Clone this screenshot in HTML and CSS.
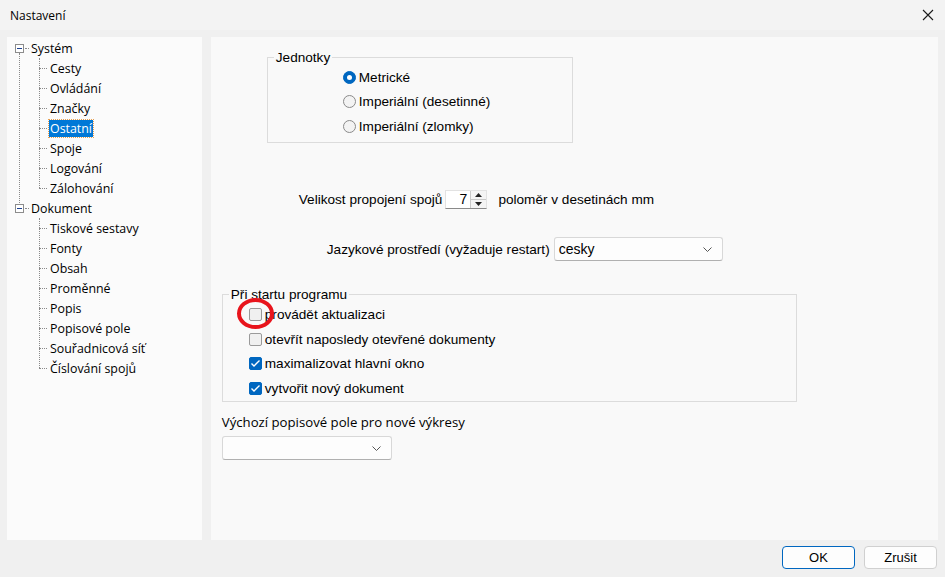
FILE: index.html
```html
<!DOCTYPE html>
<html lang="cs">
<head>
<meta charset="utf-8">
<title>Nastavení</title>
<link rel="stylesheet" href="styles.css">
</head>
<body>
<div class="window">
  <div class="titlebar">
    <span class="title">Nastavení</span>
    <svg class="close" width="12" height="12" viewBox="0 0 12 12"><path d="M1 1 L11 11 M11 1 L1 11" stroke="#1a1a1a" stroke-width="1.1" fill="none"/></svg>
  </div>
  <div class="main">
    <div class="tree">
      <div class="node root">
        <div class="row"><span class="pm"></span><span class="hdot"></span><span class="lbl">Systém</span></div>
        <div class="children">
          <div class="row child"><span class="hdot2"></span><span class="lbl">Cesty</span></div>
          <div class="row child"><span class="hdot2"></span><span class="lbl">Ovládání</span></div>
          <div class="row child"><span class="hdot2"></span><span class="lbl">Značky</span></div>
          <div class="row child"><span class="hdot2"></span><span class="lbl sel">Ostatní</span></div>
          <div class="row child"><span class="hdot2"></span><span class="lbl">Spoje</span></div>
          <div class="row child"><span class="hdot2"></span><span class="lbl">Logování</span></div>
          <div class="row child last"><span class="hdot2"></span><span class="lbl">Zálohování</span></div>
        </div>
      </div>
      <div class="node root lastroot">
        <div class="row"><span class="pm"></span><span class="hdot"></span><span class="lbl">Dokument</span></div>
        <div class="children">
          <div class="row child"><span class="hdot2"></span><span class="lbl">Tiskové sestavy</span></div>
          <div class="row child"><span class="hdot2"></span><span class="lbl">Fonty</span></div>
          <div class="row child"><span class="hdot2"></span><span class="lbl">Obsah</span></div>
          <div class="row child"><span class="hdot2"></span><span class="lbl">Proměnné</span></div>
          <div class="row child"><span class="hdot2"></span><span class="lbl">Popis</span></div>
          <div class="row child"><span class="hdot2"></span><span class="lbl">Popisové pole</span></div>
          <div class="row child"><span class="hdot2"></span><span class="lbl">Souřadnicová síť</span></div>
          <div class="row child last"><span class="hdot2"></span><span class="lbl">Číslování spojů</span></div>
        </div>
      </div>
    </div>
    <div class="content">
      <fieldset class="units">
        <legend>Jednotky</legend>
        <div class="opts">
          <div class="radio"><span class="rb on"></span>Metrické</div>
          <div class="radio"><span class="rb"></span>Imperiální (desetinné)</div>
          <div class="radio"><span class="rb"></span>Imperiální (zlomky)</div>
        </div>
      </fieldset>
      <div class="spinrow">
        <span>Velikost propojení spojů</span>
        <div class="spin">
          <span class="val">7</span>
          <div class="arrows">
            <span class="up"><svg width="7" height="4" viewBox="0 0 7 4"><path d="M3.5 0 L7 4 L0 4Z" fill="#222"/></svg></span>
            <span class="down"><svg width="7" height="4" viewBox="0 0 7 4"><path d="M0 0 L7 0 L3.5 4Z" fill="#222"/></svg></span>
          </div>
        </div>
        <span class="after">poloměr v desetinách mm</span>
      </div>
      <div class="langrow">
        <span>Jazykové prostředí (vyžaduje restart)</span>
        <div class="combo lang"><span>cesky</span><svg class="chev" width="9" height="5" viewBox="0 0 9 5"><path d="M0.5 0.5 L4.5 4.5 L8.5 0.5" stroke="#555" fill="none"/></svg></div>
      </div>
      <fieldset class="startup">
        <legend>Při startu programu</legend>
        <div class="opts">
          <div class="check"><span class="cb"></span>provádět aktualizaci<span class="mark"></span></div>
          <div class="check"><span class="cb"></span>otevřít naposledy otevřené dokumenty</div>
          <div class="check"><span class="cb on"><svg width="11" height="9" viewBox="0 0 11 9"><path d="M1.5 4.5 L4 7 L9.5 1.5" stroke="#fff" stroke-width="1.4" fill="none"/></svg></span>maximalizovat hlavní okno</div>
          <div class="check"><span class="cb on"><svg width="11" height="9" viewBox="0 0 11 9"><path d="M1.5 4.5 L4 7 L9.5 1.5" stroke="#fff" stroke-width="1.4" fill="none"/></svg></span>vytvořit nový dokument</div>
        </div>
      </fieldset>
      <div class="deflabel">Výchozí popisové pole pro nové výkresy</div>
      <div class="combo def"><span></span><svg class="chev" width="9" height="5" viewBox="0 0 9 5"><path d="M0.5 0.5 L4.5 4.5 L8.5 0.5" stroke="#555" fill="none"/></svg></div>
    </div>
  </div>
  <div class="buttons">
    <button class="btn ok">OK</button>
    <button class="btn">Zrušit</button>
  </div>
</div>
</body>
</html>
```

FILE: styles.css
```css
* { box-sizing: border-box; }
html, body { margin: 0; padding: 0; }
body {
  width: 945px; height: 577px; overflow: hidden;
  background: #f0f0f0;
  font-family: "Open Sans", "Noto Sans", sans-serif;
  color: #000;
}
.window { width: 945px; height: 577px; display: flex; flex-direction: column; background: #f0f0f0; }
.titlebar {
  height: 30px; display: flex; align-items: center; justify-content: space-between;
  padding: 0 11px 0 10px; background: #f3f3f3;
}
.title { font-size: 12px; color: #000; }
.main { display: flex; gap: 9px; padding: 7px 7px 0 7px; height: 510px; }
.tree {
  width: 195px; height: 503px; background: #fbfbfb;
  padding: 1px 0 0 8px; font-size: 12.4px;
}
.row { height: 20px; display: flex; align-items: center; position: relative; }
.pm {
  width: 9px; height: 9px; border: 1px solid #8c8c8c; background: #fff;
  position: relative; flex: none;
}
.pm::after { content: ""; position: absolute; left: 1px; top: 3px; width: 5px; height: 1px; background: #1b3f8f; }
.hdot { width: 4px; height: 1px; border-top: 1px dotted #8a8a8a; margin: 0 1px 0 1px; }
.hdot2 { width: 8px; height: 1px; border-top: 1px dotted #8a8a8a; margin: 0 2px 0 0; }
.lbl { line-height: 17px; padding: 0 1px; white-space: nowrap; }
.lbl.sel { background: #0078d7; color: #fff; outline: 1px dotted #e8a050; }
.node { position: relative; }
.root > .children { padding-left: 24px; position: relative; }
.root > .children::before {
  content: ""; position: absolute; left: 24px; top: 0; height: 130px;
  border-left: 1px dotted #8a8a8a;
}
.lastroot > .children::before { height: 150px; }
.root:first-child::after {
  content: ""; position: absolute; left: 4px; top: 15px; height: 150px;
  border-left: 1px dotted #8a8a8a;
}
.content {
  width: 728px; height: 503px; background: #f9f9f9;
  font-family: "Liberation Sans", Arial, sans-serif; font-size: 13.6px;
  padding: 13px 0 0 11px;
}
fieldset { border: 1px solid #dcdcdc; margin: 0; padding: 0; }
legend { padding: 0 2px; margin-left: 6px; line-height: 15px; font-size: 13.6px; }
.units { width: 306px; height: 93px; margin-left: 45px; }
.units .opts { padding: 0 0 0 75px; }
.radio { display: flex; align-items: center; height: 24.5px; }
.rb {
  width: 13px; height: 13px; border-radius: 50%; border: 1px solid #8a8a8a;
  background: #f3f3f3; margin-right: 3px; flex: none;
}
.rb.on { background: #0067c0; border-color: #0067c0; position: relative; }
.rb.on::after { content: ""; position: absolute; left: 3px; top: 3px; width: 5px; height: 5px; border-radius: 50%; background: #fff; }
.spinrow { display: flex; align-items: center; margin: 46px 0 0 77px; height: 20px; }
.spin {
  width: 42px; height: 19px; margin-left: 3px; display: flex;
  background: #fff; border: 1px solid #e2e2e2; border-bottom-color: #8a8a8a;
}
.spin .val { flex: 1; text-align: right; padding-right: 3px; line-height: 17px; font-size: 14px; }
.arrows { width: 16px; display: flex; flex-direction: column; border-left: 1px solid #c8c8c8; background: #f4f4f4; }
.arrows span { flex: 1; display: flex; align-items: center; justify-content: center; }
.arrows .up { border-bottom: 1px solid #c8c8c8; }
.after { margin-left: 11px; }
.langrow { display: flex; align-items: center; margin: 28px 0 0 105px; gap: 4px; }
.combo {
  height: 24px; background: #fdfdfd; border: 1px solid #d8d8d8; border-bottom-color: #b0b0b0;
  border-radius: 3px; display: flex; align-items: center; justify-content: space-between;
  padding: 0 10px 0 4px; font-size: 14px;
}
.lang { width: 169px; }
.startup { width: 575px; height: 115px; margin-top: 26px; position: relative; }
.startup .opts { padding: 0 0 0 26px; }
.check { display: flex; align-items: center; height: 24.7px; position: relative; }
.cb {
  width: 13px; height: 13px; border: 1px solid #9a9a9a; background: #f0f0f0;
  margin-right: 3px; flex: none; border-radius: 2px; display: flex; align-items: center; justify-content: center;
}
.cb.on { background: #0067c0; border-color: #0067c0; }
.mark {
  position: absolute; left: -12px; top: -4px; width: 37px; height: 31px;
  border: 4px solid #e8141c; border-radius: 50%;
}
.deflabel { margin-top: 12px; font-family: "Open Sans", "Noto Sans", sans-serif; font-size: 13.2px; line-height: 17px; }
.def { width: 170px; height: 24px; margin-top: 5px; }
.buttons { display: flex; justify-content: flex-end; gap: 9px; padding: 6px 8px 0 0; }
.btn {
  width: 73px; height: 23px; font-family: "Liberation Sans", Arial, sans-serif; font-size: 13px;
  background: #fdfdfd; border: 1px solid #d0d0d0; border-radius: 4px; color: #000; padding: 0;
}
.btn.ok { border-color: #0067c0; }
```
